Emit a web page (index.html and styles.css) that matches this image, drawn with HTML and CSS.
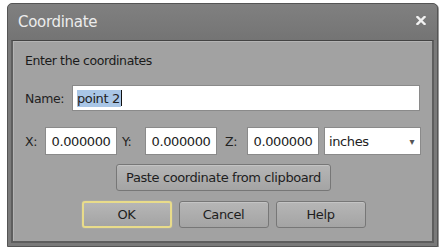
FILE: index.html
```html
<!DOCTYPE html>
<html lang="en">
  <head>
    <meta charset="UTF-8" />
    <meta name="viewport" content="width=device-width, initial-scale=1.0" />
    <title>Coordinate</title>
    <link rel="stylesheet" href="styles.css">
  </head>
  <body>
    <div class="window">
      <div class="titlebar">
        <span class="title">Coordinate</span>
        <svg class="close" width="10" height="9" viewBox="0 0 10 9">
          <path d="M1.5 1 L8.5 8 M8.5 1 L1.5 8" stroke="#f2f2f2" stroke-width="2.4" stroke-linecap="square" />
        </svg>
      </div>
      <div class="panel">
        <p class="intro">Enter the coordinates</p>

        <div class="row name-row">
          <label class="lbl name-lbl">Name:</label>
          <div class="field name-field"><span class="sel">point 2</span><span class="caret"></span></div>
        </div>

        <div class="row xyz-row">
          <label class="lbl x-lbl">X:</label>
          <div class="field num">0.000000</div>
          <label class="lbl y-lbl">Y:</label>
          <div class="field num">0.000000</div>
          <label class="lbl z-lbl">Z:</label>
          <div class="field num">0.000000</div>
          <div class="field units">inches<span class="arrow">&#x25BE;</span></div>
        </div>

        <div class="paste-row">
          <button class="btn paste">Paste coordinate from clipboard</button>
        </div>

        <div class="button-group">
          <button class="btn default">OK</button>
          <button class="btn">Cancel</button>
          <button class="btn">Help</button>
        </div>
      </div>
    </div>
  </body>
</html>
```

FILE: styles.css
```css
body {
  margin: 0;
  background: #fff;
  font-family: "Liberation Sans", Arial, sans-serif;
  font-size: 13px;
  color: #1e1e1e;
}
.window {
  margin: 3px 0 0 7px;
  width: 429px;
  height: 242px;
  border: 1px solid #555;
  border-radius: 5px 5px 0 0;
  background: #7a7a7a;
  box-shadow: 1px 1px 0 #9a9a9a;
  display: flex;
  flex-direction: column;
}
.titlebar {
  height: 36px;
  display: flex;
  align-items: center;
  justify-content: space-between;
  padding: 0 11px 0 10px;
  background: linear-gradient(#808080, #747474);
  border-radius: 5px 5px 0 0;
}
.title {
  font-family: "DejaVu Sans", sans-serif;
  font-size: 15px;
  color: #ececec;
  letter-spacing: -0.3px;
}
.close {
  margin-top: -3px;
}
.panel {
  flex: 1;
  margin: 0 3px 3px 3px;
  border: 2px solid #5e5e5e;
  border-top: 1px solid #444;
  background: #a2a2a2;
  box-shadow: inset 1px 1px 0 #b4b4b4;
  padding: 12px 10px 0 12px;
}
.intro {
  margin: 0;
  line-height: 16px;
  font-family: "DejaVu Sans", sans-serif;
  font-size: 12.5px;
  letter-spacing: -0.4px;
  color: #1a1a1a;
}
.row {
  display: flex;
  align-items: center;
}
.name-row {
  margin-top: 16px;
}
.lbl {
  font-family: "DejaVu Sans", sans-serif;
  font-size: 12.5px;
  letter-spacing: -0.4px;
  color: #222;
}
.name-lbl {
  width: 47px;
}
.field {
  background: #fff;
  border: 1px solid #8a8a8a;
  box-sizing: border-box;
  font-family: "DejaVu Sans", sans-serif;
  font-size: 13px;
  letter-spacing: -0.4px;
  display: flex;
  align-items: center;
  color: #222;
}
.name-field {
  width: 348px;
  height: 26px;
  padding-left: 4px;
}
.sel {
  background: #a9c6e6;
  line-height: 17px;
  padding-right: 1px;
}
.caret {
  width: 1px;
  height: 16px;
  background: #111;
}
.xyz-row {
  margin-top: 16px;
}
.x-lbl {
  width: 20px;
}
.y-lbl {
  width: 23px;
  margin-left: 5px;
}
.z-lbl {
  width: 22px;
  margin-left: 8px;
}
.num {
  width: 72px;
  height: 28px;
  justify-content: center;
}
.units {
  width: 97px;
  height: 28px;
  margin-left: 5px;
  padding: 0 6px 0 4px;
  justify-content: space-between;
}
.arrow {
  font-size: 10px;
  color: #555;
}
.paste-row {
  display: flex;
  justify-content: center;
  margin-top: 9px;
}
.btn {
  font-family: "DejaVu Sans", sans-serif;
  font-size: 13px;
  letter-spacing: -0.4px;
  color: #1e1e1e;
  height: 27px;
  border: 1px solid #777;
  border-radius: 3px;
  background: linear-gradient(#b6b6b6, #a4a4a4);
  box-shadow: inset 0 1px 0 #c4c4c4;
  padding: 0;
}
.paste {
  width: 215px;
}
.button-group {
  display: flex;
  justify-content: center;
  gap: 7px;
  margin-top: 10px;
}
.button-group .btn {
  width: 90px;
  height: 27px;
}
.default {
  border: 2px solid #e9dc8a;
  box-shadow: 0 0 1px #f3e9a6;
}
```
